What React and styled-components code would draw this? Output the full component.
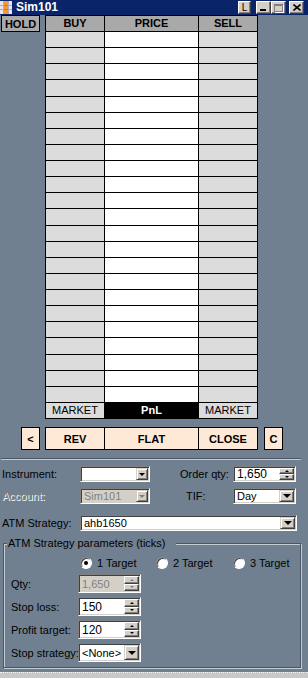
import React from "react";
import styled, { createGlobalStyle } from "styled-components";

const FONT = `"Liberation Sans", Arial, sans-serif`;

const Global = createGlobalStyle`
  html, body { margin: 0; padding: 0; background: #708090; }
  #root { width: 308px; }
  * { box-sizing: border-box; }
`;

const Window = styled.div`
  width: 308px;
  height: 678px;
  background: #708090;
  display: flex;
  flex-direction: column;
  overflow: hidden;
  font-family: ${FONT};
  font-size: 11px;
  color: #000;
`;

/* ---------- title bar ---------- */
const TitleBar = styled.div`
  flex: 0 0 15px;
  height: 15px;
  background: #0a246a;
  display: flex;
  align-items: center;
  padding-right: 4px;
`;
const TitleText = styled.span`
  color: #fff;
  font-weight: bold;
  font-size: 12px;
  line-height: 15px;
  margin-left: 4px;
`;
const Spacer = styled.div`
  flex: 1;
`;
const CaptionBtn = styled.div`
  width: ${(p) => p.$w}px;
  height: 13px;
  margin-left: ${(p) => p.$ml || 0}px;
  background: #d4d0c8;
  border: 1px solid;
  border-color: #fff #404040 #404040 #fff;
  box-shadow: inset -1px -1px 0 #808080;
  display: flex;
  align-items: center;
  justify-content: center;
  font-size: 10px;
  line-height: 10px;
  color: #000;
`;
const MinGlyph = styled.div`
  width: 6px;
  height: 2px;
  background: #000;
  margin-top: 5px;
  margin-right: 2px;
`;
const MaxGlyph = styled.div`
  width: 9px;
  height: 8px;
  border: 1px solid #808080;
  border-top-width: 2px;
  box-shadow: 1px 1px 0 #fff;
  margin-right: 1px;
`;

/* ---------- ladder ---------- */
const TopArea = styled.div`
  display: flex;
  align-items: flex-start;
  padding-left: 1px;
`;
const HoldBtn = styled.div`
  width: 39px;
  height: 17px;
  border: 1px solid #000;
  background: #a9a9a9;
  font-weight: bold;
  font-size: 11px;
  display: flex;
  align-items: center;
  justify-content: center;
`;
const Ladder = styled.div`
  margin-left: 5px;
  display: grid;
  grid-template-columns: 59px 94px 59px;
  grid-template-rows: 16px repeat(23, 1fr) 16px;
  height: 404px;
  border-top: 1px solid #000;
  border-left: 1px solid #000;
`;
const Cell = styled.div`
  border-right: 1px solid #000;
  border-bottom: 1px solid #000;
  background: ${(p) => p.$bg};
  color: ${(p) => p.$fg || "#000"};
  font-weight: ${(p) => (p.$bold ? "bold" : "normal")};
  display: flex;
  align-items: center;
  justify-content: center;
  line-height: 1;
`;

/* ---------- action buttons ---------- */
const ActionRow = styled.div`
  display: flex;
  margin-top: 8px;
  padding-left: 21px;
  height: 23px;
`;
const SideBtn = styled.div`
  width: 19px;
  margin-left: ${(p) => p.$ml || 0}px;
  border: 1px solid #000;
  background: #fde9d6;
  font-weight: bold;
  display: flex;
  align-items: center;
  justify-content: center;
`;
const ActionGroup = styled.div`
  margin-left: 5px;
  display: grid;
  grid-template-columns: 59px 94px 59px;
  border-left: 1px solid #000;
`;
const ActionBtn = styled.div`
  border: 1px solid #000;
  border-left: none;
  background: #fde9d6;
  font-weight: bold;
  display: flex;
  align-items: center;
  justify-content: center;
`;

const Separator = styled.div`
  margin-top: 8px;
  margin-left: 1px;
  width: 300px;
  height: 2px;
  border-top: 1px solid #4a5666;
  border-bottom: 1px solid #c4ccd4;
`;

/* ---------- form ---------- */
const Form = styled.div`
  display: flex;
  flex-direction: column;
  padding-left: 2px;
`;
const FormRow = styled.div`
  display: grid;
  grid-template-columns: ${(p) => p.$cols};
  align-items: center;
  height: ${(p) => p.$h}px;
  margin-top: ${(p) => p.$mt}px;
`;
const Label = styled.span`
  padding-left: ${(p) => p.$pl || 0}px;
  white-space: nowrap;
  color: ${(p) => (p.$disabled ? "#808080" : "#000")};
  text-shadow: ${(p) => (p.$disabled ? "1px 1px 0 #ffffff" : "none")};
`;
const Field = styled.div`
  width: ${(p) => p.$w}px;
  height: ${(p) => p.$h}px;
  display: flex;
  align-items: stretch;
  background: ${(p) => (p.$disabled ? "#d4d0c8" : "#fff")};
  border: 1px solid;
  border-color: #808080 #fff #fff #808080;
  box-shadow: inset 1px 1px 0 #404040, inset -1px -1px 0 #d4d0c8;
  padding: 1px;
`;
const FieldText = styled.span`
  flex: 1;
  display: flex;
  align-items: center;
  padding-left: 2px;
  font-size: ${(p) => p.$fs || 11}px;
  color: ${(p) => (p.$disabled ? "#808080" : "#000")};
  white-space: nowrap;
  overflow: hidden;
`;
const DropBtn = styled.div`
  width: ${(p) => p.$w}px;
  background: #d4d0c8;
  border: 1px solid;
  border-color: #d4d0c8 #404040 #404040 #d4d0c8;
  box-shadow: inset 1px 1px 0 #fff, inset -1px -1px 0 #808080;
  display: flex;
  align-items: center;
  justify-content: center;
`;
const ArrowDown = styled.div`
  width: 0;
  height: 0;
  border-left: ${(p) => p.$s}px solid transparent;
  border-right: ${(p) => p.$s}px solid transparent;
  border-top: ${(p) => p.$s}px solid ${(p) => (p.$disabled ? "#808080" : "#000")};
`;
const ArrowUp = styled.div`
  width: 0;
  height: 0;
  border-left: 2px solid transparent;
  border-right: 2px solid transparent;
  border-bottom: 2px solid ${(p) => (p.$disabled ? "#808080" : "#000")};
`;
const SpinCol = styled.div`
  width: 15px;
  display: flex;
  flex-direction: column;
`;
const SpinHalf = styled.div`
  flex: 1;
  background: #d4d0c8;
  border: 1px solid;
  border-color: #fff #404040 #404040 #fff;
  box-shadow: inset -1px -1px 0 #808080;
  display: flex;
  align-items: center;
  justify-content: center;
`;

/* ---------- group box ---------- */
const GroupBox = styled.div`
  position: relative;
  margin-top: 12px;
  margin-left: 1px;
  width: 298px;
  border: 1px solid #4a5666;
  box-shadow: inset 1px 1px 0 #c4ccd4, 1px 1px 0 #c4ccd4;
  padding: 0 0 5px 7px;
`;
const GroupTitle = styled.span`
  position: absolute;
  top: -7px;
  left: 3px;
  padding: 0 10px 0 1px;
  line-height: 13px;
  background: #708090;
`;
const RadioRow = styled.div`
  margin-top: 13px;
  margin-left: 69px;
  display: grid;
  grid-template-columns: 76px 77px auto;
  height: 12px;
  align-items: center;
`;
const RadioOpt = styled.label`
  display: flex;
  align-items: center;
  gap: 5px;
  line-height: 12px;
`;
const RadioCircle = styled.span`
  width: 12px;
  height: 12px;
  border-radius: 50%;
  background: #fff;
  border: 1px solid;
  border-color: #808080 #fff #fff #808080;
  box-shadow: inset 1px 1px 0 #404040;
  display: flex;
  align-items: center;
  justify-content: center;
`;
const RadioDot = styled.span`
  width: 4px;
  height: 4px;
  border-radius: 50%;
  background: #000;
`;
const GroupRows = styled.div`
  margin-top: 5px;
  display: flex;
  flex-direction: column;
  gap: 4px;
`;
const GroupRow = styled.div`
  display: grid;
  grid-template-columns: 67px auto;
  align-items: center;
  height: 19px;
`;

const Footer = styled.div`
  margin-top: auto;
  height: 6px;
  background: #c8c8c8;
  border-top: 1px dotted #f4f4f4;
`;

/* ---------- pieces ---------- */
function Combo({ w, h, text, disabled, bw = 15, as = 4 }) {
  return (
    <Field $w={w} $h={h} $disabled={disabled}>
      <FieldText $disabled={disabled}>{text}</FieldText>
      <DropBtn $w={bw}>
        <ArrowDown $s={as} $disabled={disabled} />
      </DropBtn>
    </Field>
  );
}

function Spinner({ w, h, text, disabled }) {
  return (
    <Field $w={w} $h={h} $disabled={disabled}>
      <FieldText $disabled={disabled} $fs={disabled ? 11 : 12}>
        {text}
      </FieldText>
      <SpinCol>
        <SpinHalf>
          <ArrowUp $disabled={disabled} />
        </SpinHalf>
        <SpinHalf>
          <ArrowDown $s={2} $disabled={disabled} />
        </SpinHalf>
      </SpinCol>
    </Field>
  );
}

function Radio({ checked, label }) {
  return (
    <RadioOpt>
      <RadioCircle>{checked && <RadioDot />}</RadioCircle>
      {label}
    </RadioOpt>
  );
}

function AppIcon() {
  return (
    <svg width="12" height="13" viewBox="0 0 12 13">
      <rect x="0" y="0" width="12" height="13" fill="#e9e4f4" />
      <rect x="4" y="0" width="4" height="13" fill="#f39a2a" />
      <rect x="0" y="4" width="12" height="1" fill="#b0a8c8" />
      <rect x="0" y="8" width="12" height="1" fill="#b0a8c8" />
      <rect x="3" y="0" width="1" height="13" fill="#b0a8c8" />
      <rect x="8" y="0" width="1" height="13" fill="#b0a8c8" />
      <rect x="4" y="4" width="4" height="1" fill="#d4781a" />
      <rect x="4" y="8" width="4" height="1" fill="#d4781a" />
    </svg>
  );
}

const ROWS = Array.from({ length: 23 }, (_, i) => i);

export default function App() {
  return (
    <>
      <Global />
      <Window>
        <TitleBar>
          <AppIcon />
          <TitleText>Sim101</TitleText>
          <Spacer />
          <CaptionBtn $w={13}>L</CaptionBtn>
          <CaptionBtn $w={15} $ml={5}>
            <MinGlyph />
          </CaptionBtn>
          <CaptionBtn $w={15}>
            <MaxGlyph />
          </CaptionBtn>
          <CaptionBtn $w={15} $ml={3}>
            <svg width="8" height="7" viewBox="0 0 8 7">
              <path d="M0.5 0.5 L7.5 6.5 M7.5 0.5 L0.5 6.5" stroke="#000" strokeWidth="1.6" />
            </svg>
          </CaptionBtn>
        </TitleBar>

        <TopArea>
          <HoldBtn>HOLD</HoldBtn>
          <Ladder>
            <Cell $bg="#a9a9a9" $bold>BUY</Cell>
            <Cell $bg="#a9a9a9" $bold>PRICE</Cell>
            <Cell $bg="#a9a9a9" $bold>SELL</Cell>
            {ROWS.map((i) => (
              <React.Fragment key={i}>
                <Cell $bg="#dcdcdc" />
                <Cell $bg="#ffffff" />
                <Cell $bg="#dcdcdc" />
              </React.Fragment>
            ))}
            <Cell $bg="#dcdcdc">MARKET</Cell>
            <Cell $bg="#000000" $fg="#ffffff" $bold>PnL</Cell>
            <Cell $bg="#dcdcdc">MARKET</Cell>
          </Ladder>
        </TopArea>

        <ActionRow>
          <SideBtn>&lt;</SideBtn>
          <ActionGroup>
            <ActionBtn>REV</ActionBtn>
            <ActionBtn>FLAT</ActionBtn>
            <ActionBtn>CLOSE</ActionBtn>
          </ActionGroup>
          <SideBtn $ml={6}>C</SideBtn>
        </ActionRow>

        <Separator />

        <Form>
          <FormRow $cols="78px 70px 83px 63px" $h={16} $mt={6}>
            <Label>Instrument:</Label>
            <Combo w={70} h={16} text="" bw={12} as={3} />
            <Label $pl={30}>Order qty:</Label>
            <Spinner w={63} h={16} text="1,650" />
          </FormRow>
          <FormRow $cols="78px 70px 83px 63px" $h={16} $mt={6}>
            <Label $disabled>Account:</Label>
            <Combo w={70} h={16} text="Sim101" disabled bw={12} as={3} />
            <Label $pl={36}>TIF:</Label>
            <Combo w={63} h={16} text="Day" as={4} />
          </FormRow>
          <FormRow $cols="78px 217px" $h={16} $mt={11}>
            <Label>ATM Strategy:</Label>
            <Combo w={217} h={16} text="ahb1650" as={4} />
          </FormRow>

          <GroupBox>
            <GroupTitle>ATM Strategy parameters (ticks)</GroupTitle>
            <RadioRow>
              <Radio checked label="1 Target" />
              <Radio label="2 Target" />
              <Radio label="3 Target" />
            </RadioRow>
            <GroupRows>
              <GroupRow>
                <Label>Qty:</Label>
                <Spinner w={63} h={19} text="1,650" disabled />
              </GroupRow>
              <GroupRow>
                <Label>Stop loss:</Label>
                <Spinner w={63} h={19} text="150" />
              </GroupRow>
              <GroupRow>
                <Label>Profit target:</Label>
                <Spinner w={63} h={19} text="120" />
              </GroupRow>
              <GroupRow>
                <Label>Stop strategy:</Label>
                <Combo w={63} h={19} text="<None>" as={4} />
              </GroupRow>
            </GroupRows>
          </GroupBox>
        </Form>

        <Footer />
      </Window>
    </>
  );
}
